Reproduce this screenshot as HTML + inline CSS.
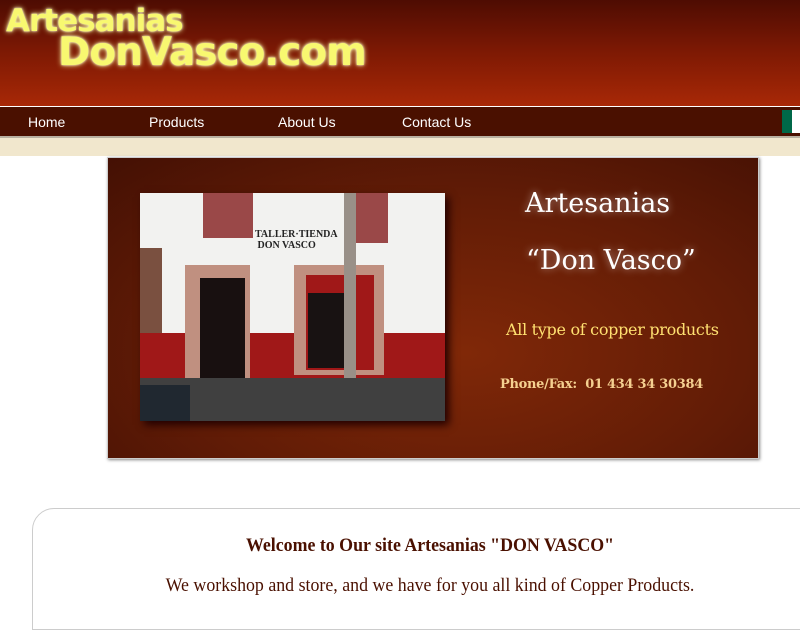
<!DOCTYPE html>
<html><head><meta charset="utf-8"><style>
body{margin:0;width:800px;height:600px;overflow:hidden;background:#fff;font-family:"Liberation Sans",sans-serif;position:relative}
.hdr{position:absolute;left:0;top:0;width:800px;height:106px;background:linear-gradient(180deg,#4e0c02 0%,#7a1804 45%,#a82806 100%)}
.logo{position:absolute;font-family:"DejaVu Sans",sans-serif;font-weight:bold;color:#f8f870;text-shadow:0 0 6px #ffffa0,0 0 2px #fff;letter-spacing:-1px;white-space:nowrap}
.nav{position:absolute;left:0;top:106px;width:800px;height:29px;background:#4a1000;border-top:1px solid #fff;border-bottom:2px solid #b8b0a0}
.nav span{position:absolute;top:7px;color:#fff;font-size:14px}
.cream{position:absolute;left:0;top:138px;width:800px;height:18px;background:#f1e7cd}
.ban{position:absolute;left:107px;top:157px;width:650px;height:300px;background:radial-gradient(ellipse at 55% 65%,#802808,#621c06 55%,#441004);box-shadow:1px 1px 3px #888;border:1px solid #ccc}
.ph{position:absolute;left:140px;top:193px;width:305px;height:228px;background:#f2f2f0;box-shadow:4px 4px 8px #200;overflow:hidden}
.ph div{position:absolute}
.t{position:absolute;font-family:"DejaVu Serif","Liberation Serif",serif;white-space:nowrap}
.c{transform:scaleX(0.94);transform-origin:430px 0}
.box{position:absolute;left:32px;top:508px;width:800px;height:120px;border:1px solid #ccc;border-radius:22px 0 0 0}
</style></head><body>
<div class="hdr"></div>
<div class="logo" style="left:6px;top:3px;font-size:31px">Artesanias</div>
<div class="logo" style="left:58px;top:30px;font-size:39px">DonVasco.com</div>
<div class="nav"><span style="left:28px">Home</span><span style="left:149px">Products</span><span style="left:278px">About Us</span><span style="left:402px">Contact Us</span>
<div style="position:absolute;left:782px;top:3px;width:10px;height:23px;background:#006848"></div><div style="position:absolute;left:792px;top:3px;width:8px;height:23px;background:#fff"></div></div>
<div class="cream"></div>
<div class="ban"></div>
<div class="ph">
<div style="left:0;top:140px;width:305px;height:60px;background:#a01818"></div>
<div style="left:0;top:55px;width:22px;height:85px;background:#7a5040"></div>
<div style="left:63px;top:0;width:50px;height:45px;background:#9a4848"></div>
<div style="left:206px;top:0;width:42px;height:50px;background:#9a4848"></div>
<div style="left:45px;top:72px;width:65px;height:115px;background:#c09080"></div>
<div style="left:60px;top:85px;width:45px;height:100px;background:#181010"></div>
<div style="left:154px;top:72px;width:90px;height:110px;background:#c09080"></div>
<div style="left:166px;top:82px;width:68px;height:95px;background:#a01818"></div>
<div style="left:168px;top:100px;width:40px;height:75px;background:#181212"></div>
<div style="left:204px;top:0;width:12px;height:210px;background:#999088"></div>
<div style="left:0;top:185px;width:305px;height:43px;background:#404040"></div>
<div style="left:0;top:192px;width:50px;height:36px;background:#202830"></div>
<div style="left:115px;top:36px;font:bold 10px 'Liberation Serif',serif;color:#222">TALLER·TIENDA<br>&nbsp;DON VASCO</div>
</div>
<div class="t" style="left:525px;top:188px;font-size:27px;color:#fff;text-shadow:0 0 8px #fff8">Artesanias</div>
<div class="t" style="left:526px;top:245px;font-size:27px;color:#fff;text-shadow:0 0 8px #fff8">“Don Vasco”</div>
<div class="t" style="left:506px;top:320px;font-size:16px;color:#ffe070;letter-spacing:-0.3px">All type of copper products</div>
<div class="t" style="left:500px;top:377px;font-size:13px;color:#f5d090;font-weight:bold;letter-spacing:-0.3px">Phone/Fax:&nbsp; 01 434 34 30384</div>
<div class="box"></div>
<div class="t c" style="left:0;width:860px;text-align:center;top:535px;font-family:'Liberation Serif',serif;font-size:19px;font-weight:bold;color:#4a1000">Welcome to Our site Artesanias "DON VASCO"</div>
<div class="t c" style="left:0;width:860px;text-align:center;top:575px;font-family:'Liberation Serif',serif;font-size:19px;color:#4a1000">We workshop and store, and we have for you all kind of Copper Products.</div>
</body></html>
